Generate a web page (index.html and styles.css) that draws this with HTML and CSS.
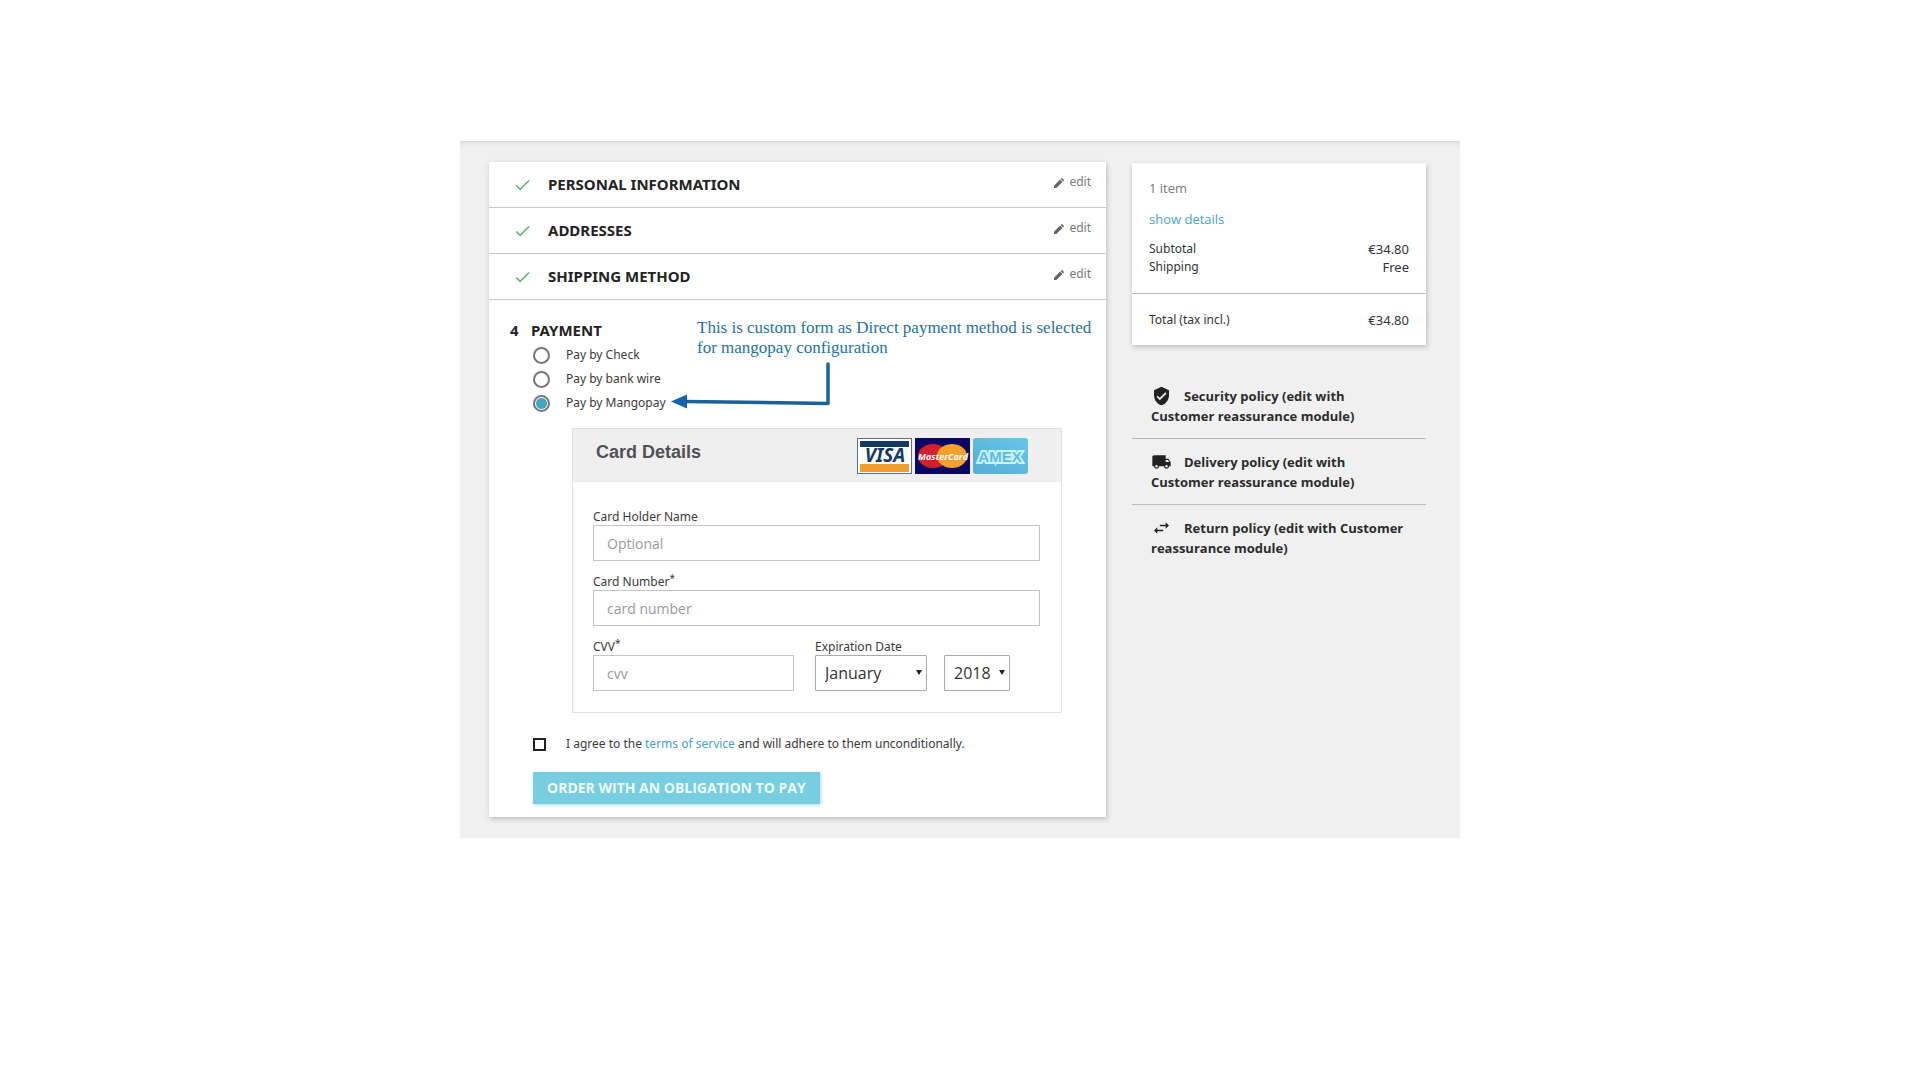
FILE: index.html
```html
<!DOCTYPE html>
<html lang="en">
<head>
<meta charset="utf-8">
<title>Checkout</title>
<link rel="stylesheet" href="styles.css">
</head>
<body>
<svg class="sprite" aria-hidden="true">
  <symbol id="check" viewBox="0 0 24 24"><path d="M9 16.2L4.8 12l-1.4 1.4L9 19 21 7l-1.4-1.4L9 16.200z"/></symbol>
  <symbol id="pencil" viewBox="0 0 24 24"><path d="M2 17.250V22h4.750L18.800 9.900l-4.700-4.700L2 17.250zM21.700 7c.4-.4.4-1 0-1.400l-3.300-3.300c-.4-.4-1-.4-1.400 0l-1.800 1.800 4.700 4.700L21.700 7z"/></symbol>
</svg>
<div class="checkout">
  <main class="steps">
    <section class="step"><svg class="done"><use href="#check"/></svg><h2>PERSONAL INFORMATION</h2><a class="edit" href="#"><svg><use href="#pencil"/></svg>edit</a></section>
    <section class="step"><svg class="done"><use href="#check"/></svg><h2>ADDRESSES</h2><a class="edit" href="#"><svg><use href="#pencil"/></svg>edit</a></section>
    <section class="step"><svg class="done"><use href="#check"/></svg><h2>SHIPPING METHOD</h2><a class="edit" href="#"><svg><use href="#pencil"/></svg>edit</a></section>
    <section class="payment">
      <h2><span class="num">4</span>PAYMENT</h2>
      <div class="methods">
        <label><input type="radio" name="method">Pay by Check</label>
        <label><input type="radio" name="method">Pay by bank wire</label>
        <label><input type="radio" name="method" checked>Pay by Mangopay</label>
      </div>
      <p class="note">This is custom form as Direct payment method is selected<br>for mangopay configuration</p>
      <svg class="arrow" viewBox="0 0 160 50" aria-hidden="true"><path d="M157 3V42.500L14 40.500" fill="none" stroke="#1a6299" stroke-width="3.500" stroke-linejoin="round" stroke-linecap="round"/><path d="M0 40.500L16 33.500V47.500z" fill="#1263b0"/></svg>
      <form class="card" id="pay">
        <header>
          <h3>Card Details</h3>
          <div class="brands">
            <svg viewBox="0 0 55 36"><path fill="#56728d" d="M0 0h55v36H0z"/><path fill="#fff" d="M1 1h53v34H1z"/><path fill="#123a63" d="M3 3h49v6H3z"/><path fill="#eda02d" d="M3 26h49v8H3z"/><text x="28" y="24" text-anchor="middle" class="visa">VISA</text></svg>
            <svg viewBox="0 0 55 36"><path fill="#0b0563" d="M0 0h55v36H0z"/><ellipse cx="18" cy="18" rx="15" ry="12" fill="#d3202c"/><ellipse cx="37" cy="18" rx="15" ry="12" fill="#f3a02c"/><path d="M26 12h-2M26 15h-3M26 18h-3M26 21h-3M26 24h-2" stroke="#f3a02c"/><text x="28" y="22" text-anchor="middle" class="mc">MasterCard</text></svg>
            <svg viewBox="0 0 55 36"><defs><linearGradient id="ax" x1="0" y1="1" x2="1" y2="0"><stop stop-color="#58acd3"/><stop offset="1" stop-color="#66c7e9"/></linearGradient></defs><rect width="55" height="36" rx="3" fill="url(#ax)"/><text x="27" y="24" text-anchor="middle" class="amex">AMEX</text></svg>
          </div>
        </header>
        <div class="fields">
          <div class="field"><label for="holder">Card Holder Name</label><input id="holder" type="text" placeholder="Optional"></div>
          <div class="field"><label for="number">Card Number<sup>*</sup></label><input id="number" type="text" placeholder="card number"></div>
          <div class="split">
            <div class="field"><label for="cvv">CVV<sup>*</sup></label><input id="cvv" type="text" placeholder="cvv"></div>
            <div class="field">
              <label for="month">Expiration Date</label>
              <div class="dates">
                <span class="pick month"><select id="month"><option>January</option><option>February</option><option>March</option></select></span>
                <span class="pick year"><select aria-label="Expiration year"><option>2018</option><option>2019</option><option>2020</option></select></span>
              </div>
            </div>
          </div>
        </div>
      </form>
      <div class="agree"><input type="checkbox" id="terms" form="pay"><label for="terms">I agree to the <a href="#">terms of service</a> and will adhere to them unconditionally.</label></div>
      <button class="order" type="submit" form="pay">ORDER WITH AN OBLIGATION TO PAY</button>
    </section>
  </main>
  <aside>
    <section class="summary">
      <div class="lines">
        <p class="count">1 item</p>
        <a class="details" href="#">show details</a>
        <dl><dt>Subtotal</dt><dd>€34.80</dd><dt>Shipping</dt><dd>Free</dd></dl>
      </div>
      <dl class="total"><dt>Total (tax incl.)</dt><dd>€34.80</dd></dl>
    </section>
    <ul class="policies">
      <li><svg viewBox="0 0 24 24"><path d="M12 1L3 5v6c0 5.500 3.800 10.700 9 12 5.200-1.300 9-6.500 9-12V5l-9-4zm-2 16l-4-4 1.400-1.400L10 14.200l6.600-6.600L18 9l-8 8z"/></svg>Security policy (edit with Customer reassurance module)</li>
      <li><svg viewBox="0 0 24 24"><path d="M20 8h-3V4H3c-1.100 0-2 .9-2 2v11h2c0 1.700 1.300 3 3 3s3-1.300 3-3h6c0 1.700 1.300 3 3 3s3-1.300 3-3h2v-5l-3-4zM6 18.500a1.500 1.500 0 1 1 0-3 1.500 1.500 0 0 1 0 3zm13.500-9l2 2.500H17V9.500h2.500zM18 18.500a1.500 1.500 0 1 1 0-3 1.500 1.500 0 0 1 0 3z"/></svg>Delivery policy (edit with Customer reassurance module)</li>
      <li><svg viewBox="0 0 24 24"><path d="M7 11l-4 4 4 4v-3h7v-2H7v-3zm14-2l-4-4v3h-7v2h7v3l4-4z"/></svg>Return policy (edit with Customer reassurance module)</li>
    </ul>
  </aside>
</div>
</body>
</html>
```
FILE: styles.css
```css
* { box-sizing: border-box; }
body { margin: 0; background: #fff; color: #3a3a3a; font: 12px/20px "Noto Sans", sans-serif; }
h2, h3, p, dl, dd, ul { margin: 0; padding: 0; }
a { color: #45a5bd; text-decoration: none; }
.sprite { display: none; }

.checkout {
  display: grid;
  grid-template-columns: minmax(0, 1fr) 294px;
  gap: 26px;
  align-items: start;
  max-width: 1000px;
  margin: 141px auto;
  padding: 21px 34px 21px 29px;
  background: linear-gradient(#d2d2d2, #e8e8e8 2px, #f0f0f0 6px);
}
.steps, .summary { background: #fff; box-shadow: 1px 2px 5px #bbb; }

.step {
  display: flex;
  align-items: center;
  height: 46px;
  padding: 0 15px 2px 24px;
  border-bottom: 1px solid #c8c8c8;
}
h2 { color: #232323; font-size: 15px; line-height: 20px; font-weight: 700; }
.done { width: 19px; height: 20px; margin: 2px 16px 0 0; fill: #5db571; }
.edit { display: flex; align-items: center; gap: 4px; margin: 0 0 4px auto; color: #7a7a7a; }
.edit svg { width: 12px; height: 12px; margin-top: 2px; fill: #666; }

.payment { position: relative; padding: 20px 44px 13px; }
.payment h2 { margin-left: -23px; }
.num { display: inline-block; width: 21px; }
.methods { display: flex; flex-direction: column; align-items: flex-start; margin-top: 3px; }
.methods label { display: flex; align-items: center; height: 24px; }
.methods input {
  appearance: none;
  width: 17px;
  height: 17px;
  margin: 0 16px 0 0;
  border: 2px solid #777;
  border-radius: 50%;
}
.methods input:checked { background: radial-gradient(circle, #3fa9c4 5px, #fff 6px); }

/* callout drawn over the payment step */
.note { position: absolute; top: 18px; left: 208px; color: #25739f; font: 17px/20px "Liberation Serif", serif; white-space: nowrap; }
.arrow { position: absolute; top: 61px; left: 182px; width: 160px; height: 50px; }

.card { margin: 13px 0 0 39px; border: 1px solid #e2e2e2; }
.card header { display: flex; justify-content: space-between; height: 53px; padding: 9px 33px 0 23px; background: #efefef; }
h3 { color: #505156; font: 700 18px/28px "Liberation Sans", sans-serif; }
.brands { display: flex; gap: 3px; }
.brands svg { width: 55px; height: 36px; }
.visa { fill: #123a63; font: italic 700 19px "Noto Sans", sans-serif; }
.mc { fill: #fff; font: italic 700 9px "Open Sans", sans-serif; }
.amex { fill: #62b9df; stroke: #c9f5ff; stroke-width: 4px; paint-order: stroke; font: 700 15px "Liberation Sans", sans-serif; }

.fields { display: flex; flex-direction: column; gap: 13px; padding: 27px 21px 21px 20px; }
.field { display: flex; flex-direction: column; }
.field label { line-height: 16px; }
sup { font-size: 10px; line-height: 0; vertical-align: 4px; }
.field input { width: 100%; height: 36px; padding: 0 13px; border: 1px solid #c4c4c4; background: #fff; font: 14px "Open Sans", sans-serif; }
.field input::placeholder { color: #999; }
.split { display: grid; grid-template-columns: 201px 1fr; gap: 21px; }
.dates { display: flex; gap: 17px; }
.pick { position: relative; }
.pick::after { content: ""; position: absolute; top: 15px; right: 5px; border: 3px solid transparent; border-top: 5px solid #222; border-bottom: 0; pointer-events: none; }
.pick select { appearance: none; width: 100%; height: 36px; padding: 0 9px; border: 1px solid #aaa; border-radius: 1px; background: #fff; color: #333; font: 16px "Open Sans", sans-serif; }
.month { width: 112px; }
.year { width: 66px; }

.agree { display: flex; align-items: center; margin-top: 21px; }
.agree input { appearance: none; width: 13px; height: 13px; margin: 0 20px 0 0; border: 2px solid #222; background: #fff; }
.order { height: 32px; margin-top: 18px; padding: 0 14px; border: 0; background: #78cde0; box-shadow: 1px 1px 3px #a8dbe6; color: #edfdff; font: 700 14px/20px "Open Sans", sans-serif; }

.summary { margin-top: 1px; color: #333; }
.lines { display: flex; flex-direction: column; align-items: flex-start; padding: 15px 17px 17px; border-bottom: 1px solid #bbb; }
.count, .details { font: 13px/20px "Open Sans", sans-serif; }
.count { margin-bottom: 11px; color: #777; }
.summary dl { display: grid; grid-template-columns: 1fr auto; width: 100%; line-height: 18px; }
.lines dl { margin-top: 11px; }
dd { text-align: right; font-size: 13px; }
.summary .total { padding: 17px 17px 16px; }

.policies { margin-top: 28px; list-style: none; color: #2c2c2c; font: 700 13px/20px "Open Sans", sans-serif; }
.policies li { padding: 13px 19px 12px; border-bottom: 1px solid #bbb; }
.policies li:last-child { border: 0; }
.policies svg { width: 21px; height: 20px; margin-right: 12px; fill: #222; vertical-align: top; }
```
